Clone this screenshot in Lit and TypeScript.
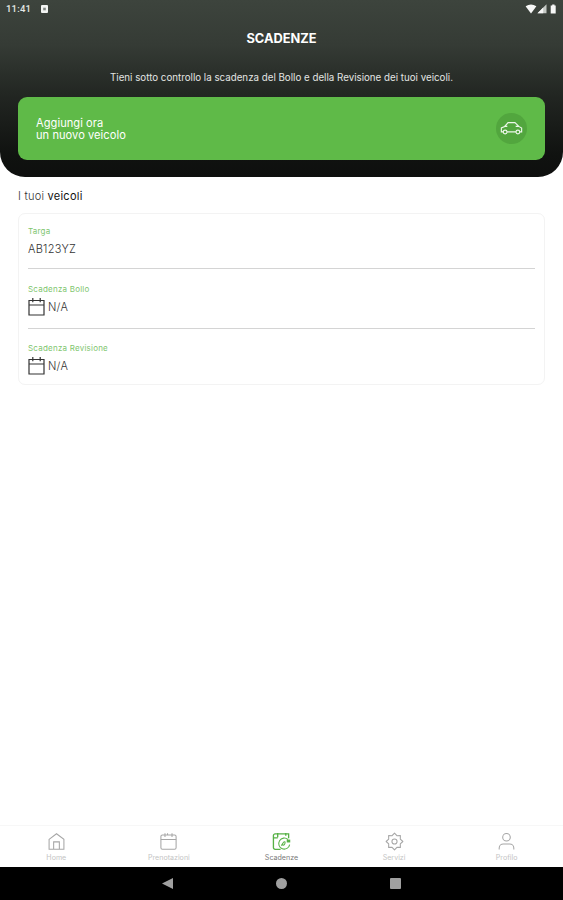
import { LitElement, html, css, svg } from "lit";
import { customElement, property } from "lit/decorators.js";

const calendar = svg`<path d="M2.5 3.5h15v14.5h-15zM2.5 8h15M6.3 1v4.2M13.7 1v4.2"/>`;

const icons: Record<string, unknown> = {
  home: svg`<path d="M2.2 7.7 10 1.8l7.8 5.9V18.2H2.2zM7 18V10.4h6V18"/>`,
  calendar: svg`<rect x="2" y="3.2" width="16" height="15" rx="1.6"/><path d="M2 8h16M6.3 1.3v4M13.7 1.3v4M9 1.3v1.9"/>`,
  deadlines: svg`<path d="M9 18.2H3.3a1.8 1.8 0 0 1-1.8-1.8V3.8A1.8 1.8 0 0 1 3.3 2h14.2v4.5M2 6.2h4M6 1v4.5M14.5 1v3" stroke-width="1.4"/><path d="M18.6 13.2a5.8 5.8 0 1 1-1.8-5.3M9.6 14.3c1.4-.3 1.8-4.2 3.8-4.4M10.8 13.5c1.7 1 3.2-.6 3-3.4"/><path d="M15.5 9.5h3.7" stroke-width="3"/>`,
  gear: svg`<path d="M10 1.2 12.5 3.9 16.2 3.8 16.1 7.5 18.8 10 16.1 12.5 16.2 16.2 12.5 16.1 10 18.8 7.5 16.1 3.8 16.2 3.9 12.5 1.2 10 3.9 7.5 3.8 3.8 7.5 3.9z" stroke-linejoin="round"/><circle cx="10" cy="10" r="2.7"/>`,
  user: svg`<circle cx="10" cy="5.5" r="4"/><path d="M2.3 18.3v-1.5a4.3 4.3 0 0 1 4.3-4.2h6.8a4.3 4.3 0 0 1 4.3 4.2v1.5"/>`,
};

@customElement("status-bar")
class StatusBar extends LitElement {
  static styles = css`
    :host { display: flex; height: 18px; align-items: center; padding: 0 5px 0 6px; color: #e4e7e4; }
    .time { font: 500 9.5px/18px Roboto, sans-serif; letter-spacing: 0.2px; }
    .app { width: 7px; height: 8px; margin-left: 10px; }
    .signals { width: 33px; height: 10px; margin-left: auto; }
    svg { display: block; }
  `;
  render() {
    return html`
      <span class="time">11:41</span>
      <svg class="app" viewBox="0 0 7 8"><rect width="7" height="8" rx="1" fill="#f2f4f2"/><rect x="2.2" y="2.7" width="2.6" height="2.6" fill="#7e847f"/></svg>
      <svg class="signals" viewBox="0 0 33 10" fill="#f7f8f7">
        <path d="M.6 2.2Q6 -1.1 11.4 2.2L6 9.4z"/>
        <path d="M21.5.3v9h-9z" fill="#c5c9c5"/><path d="M18.2 6v3.3h-5.7L18.2 3.6z"/>
        <path d="M27.2.4h2.3v1.1h1.2v7.9h-5V1.5h1.5z"/>
      </svg>`;
  }
}

@customElement("vehicle-field")
class VehicleField extends LitElement {
  @property() label = "";
  @property() value = "";
  @property({ type: Boolean }) date = false;
  static styles = css`
    :host { display: block; box-sizing: border-box; font-family: Inter, sans-serif; }
    .label { font-size: 8px; line-height: 10px; color: #7fc670; letter-spacing: 0.22px; white-space: nowrap; }
    .value { display: flex; align-items: center; gap: 3px; margin-top: 3px; height: 19px; font-size: 11px; letter-spacing: 0.25px; font-weight: 300; color: #333; }
    svg { width: 17px; height: 19px; fill: none; stroke: #333; stroke-width: 1.2; }
  `;
  render() {
    return html`
      <div class="label">${this.label}</div>
      <div class="value">
        ${this.date ? html`<svg viewBox="1.5 0 17 19">${calendar}</svg>` : ""}
        <span>${this.value}</span>
      </div>`;
  }
}

@customElement("nav-item")
class NavItem extends LitElement {
  @property() icon = "";
  @property() label = "";
  @property({ type: Boolean, reflect: true }) active = false;
  static styles = css`
    :host { display: flex; flex: 1 1 0; flex-direction: column; align-items: center; padding-top: 6px; color: #c4c4c4; }
    svg { width: 19px; height: 19px; fill: none; stroke: #a6a6a6; stroke-width: 1.1; }
    .label { margin-top: 3px; font: 400 7.1px/8px Inter, sans-serif; }
    :host([active]) { color: #777; }
    :host([active]) svg { stroke: #56b145; }
  `;
  render() {
    return html`<svg viewBox="0 0 20 20">${icons[this.icon]}</svg><span class="label">${this.label}</span>`;
  }
}

@customElement("app-root")
class AppRoot extends LitElement {
  static styles = css`
    :host { display: flex; flex-direction: column; height: 900px; background: #fff; font-family: Inter, sans-serif; overflow: hidden; }
    .header { height: 177px; box-sizing: border-box; border-radius: 0 0 25px 25px; background: linear-gradient(#3d443d 0, #353b35 45px, #222622 95px, #101210 155px, #0e0f0e); color: #fff; }
    .title { margin: 12px 0 0; text-align: center; font-size: 12.8px; line-height: 18px; font-weight: 700; }
    .intro { margin: 22px 0 0; text-align: center; font-size: 9.75px; line-height: 15px; color: #e3e5e3; white-space: nowrap; }
    .add { display: flex; align-items: center; justify-content: space-between; height: 63px; margin: 12px 18px 0; padding: 0 18px; box-sizing: border-box; border-radius: 9px; background: #5fba48; }
    .add-text { font-size: 11.1px; line-height: 12px; letter-spacing: 0.05px; }
    .badge { display: flex; width: 31px; height: 31px; align-items: center; justify-content: center; border-radius: 50%; background: #52a63e; }
    .badge svg { width: 23px; height: 15px; fill: none; stroke: #edf7ea; stroke-width: 1.1; }
    .content { flex: 1; padding: 12px 18px 0; }
    .section { margin: 0; font-size: 11px; line-height: 15px; letter-spacing: 0.24px; font-weight: 300; color: #333; }
    .section b { font-weight: 400; color: #111; }
    .vehicle { box-sizing: border-box; height: 172px; margin-top: 9px; padding: 12px 9px 0; border: 1.5px solid #f3f3f3; border-radius: 7px; }
    .plate { height: 43px; border-bottom: 1px solid #d4d4d4; }
    .tax { height: 60px; padding-top: 15px; border-bottom: 1px solid #d4d4d4; }
    .inspection { padding-top: 14px; }
    .tabs { display: flex; height: 42px; box-sizing: border-box; border-top: 1px solid #f7f7f7; }
    .system { display: flex; align-items: center; justify-content: center; gap: 103px; height: 33px; background: #000; }
    .system svg { width: 11px; height: 11px; fill: #a0a0a0; }
  `;
  render() {
    return html`
      <header class="header">
        <status-bar></status-bar>
        <h1 class="title">SCADENZE</h1>
        <p class="intro">Tieni sotto controllo la scadenza del Bollo e della Revisione dei tuoi veicoli.</p>
        <div class="add">
          <div class="add-text">Aggiungi ora<br />un nuovo veicolo</div>
          <div class="badge">
            <svg viewBox="0 0 22 14"><path d="M3 10.2H1.3V6.5L4.5 5 7.7 1.4h6.6L18 5l2.7 1.5v3.7H19M6.7 10.2h8.6M4 5h3M15 5h3"/><circle cx="4.9" cy="10.4" r="1.8"/><circle cx="17.1" cy="10.4" r="1.8"/></svg>
          </div>
        </div>
      </header>
      <main class="content">
        <h2 class="section">I tuoi <b>veicoli</b></h2>
        <section class="vehicle">
          <vehicle-field class="plate" label="Targa" value="AB123YZ"></vehicle-field>
          <vehicle-field class="tax" label="Scadenza Bollo" value="N/A" date></vehicle-field>
          <vehicle-field class="inspection" label="Scadenza Revisione" value="N/A" date></vehicle-field>
        </section>
      </main>
      <nav class="tabs">
        <nav-item icon="home" label="Home"></nav-item>
        <nav-item icon="calendar" label="Prenotazioni"></nav-item>
        <nav-item icon="deadlines" label="Scadenze" active></nav-item>
        <nav-item icon="gear" label="Servizi"></nav-item>
        <nav-item icon="user" label="Profilo"></nav-item>
      </nav>
      <footer class="system">
        <svg viewBox="0 0 11 11"><path d="M11 0v11L0 5.5z"/></svg>
        <svg viewBox="0 0 11 11"><circle cx="5.5" cy="5.5" r="5.5"/></svg>
        <svg viewBox="0 0 11 11"><rect width="11" height="11" rx="1"/></svg>
      </footer>`;
  }
}
